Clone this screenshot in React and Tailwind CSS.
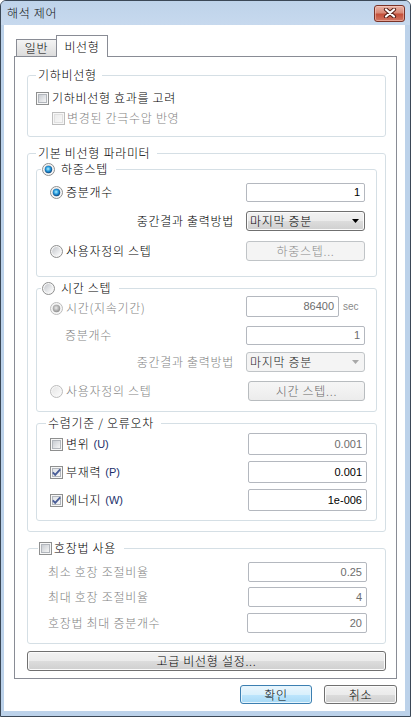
import React, { useId } from "react";

function Radio({ checked = false, disabled = false }) {
  const uid = useId().replace(/[^a-zA-Z0-9]/g, "");
  return (
    <svg width="13" height="13" viewBox="0 0 13 13" className="shrink-0">
      <defs>
        <linearGradient id={`rf${uid}`} x1="0" y1="0" x2="1" y2="1">
          <stop offset="0" stopColor={disabled ? "#e6e6e6" : "#c4c7cc"} />
          <stop offset="1" stopColor={disabled ? "#fafafa" : "#ffffff"} />
        </linearGradient>
        <radialGradient id={`rd${uid}`} cx="0.45" cy="0.42" r="0.6">
          <stop offset="0" stopColor={disabled ? "#ececec" : "#aef2ff"} />
          <stop offset="0.55" stopColor={disabled ? "#b4b4b4" : "#2293d8"} />
          <stop offset="1" stopColor={disabled ? "#8c8c8c" : "#0c3d70"} />
        </radialGradient>
      </defs>
      <circle cx="6.5" cy="6.5" r="6" fill="#f6f6f6" stroke={disabled ? "#bcbcbc" : "#8e8f8f"} />
      <circle cx="6.5" cy="6.5" r="4.4" fill={`url(#rf${uid})`} />
      {checked && <circle cx="6.5" cy="6.5" r="3.7" fill={`url(#rd${uid})`} />}
    </svg>
  );
}

function Check({ checked = false, disabled = false }) {
  const uid = useId().replace(/[^a-zA-Z0-9]/g, "");
  return (
    <svg width="13" height="13" viewBox="0 0 13 13" className="shrink-0">
      <defs>
        <linearGradient id={`cf${uid}`} x1="0" y1="0" x2="1" y2="1">
          <stop offset="0" stopColor={disabled ? "#ebebeb" : checked ? "#dfe2e6" : "#c6cad0"} />
          <stop offset="1" stopColor={disabled ? "#f8f8f8" : "#f8f8f8"} />
        </linearGradient>
      </defs>
      <rect x="0.5" y="0.5" width="12" height="12" fill="#f7f7f7" stroke={disabled ? "#bdbdbd" : "#8e8f8f"} />
      <rect x="2.5" y="2.5" width="8" height="8" fill={`url(#cf${uid})`} stroke={disabled ? "#e0e0e0" : "#b2b6bc"} />
      {checked && (
        <path d="M2.8 6.4 L5.2 8.9 L10.2 3.3" fill="none" stroke="#4a5e98" strokeWidth="1.9" />
      )}
    </svg>
  );
}

function Field({ value, className, muted = false }) {
  return (
    <div
      className={`${className} shrink-0 border border-[#b4b8bf] rounded-[2px] bg-white flex items-center justify-end pr-[4px] font-['Liberation_Sans',sans-serif] font-normal text-[11px] leading-[13px] tracking-normal ${
        muted ? "text-[#6d6d6d]" : "text-black"
      }`}
    >
      {value}
    </div>
  );
}

function Combo({ disabled = false }) {
  return (
    <div
      className={`w-[119px] h-[20px] shrink-0 rounded-[3px] border flex items-center justify-between pl-[3px] pr-[5px] ${
        disabled
          ? "border-[#c0c4c7] bg-[#f4f4f4] text-[#1a1a1a]"
          : "border-[#707070] bg-[linear-gradient(#f2f2f2_0%,#ebebeb_50%,#dddddd_50%,#cfcfcf_100%)] shadow-[inset_0_0_0_1px_#fbfbfb] text-black"
      }`}
    >
      <span>마지막 증분</span>
      <svg width="7" height="4" viewBox="0 0 7 4">
        <path d="M0 0 H7 L3.5 4 Z" fill={disabled ? "#a8a8a8" : "#000"} />
      </svg>
    </div>
  );
}

function Group({ legend, className, children }) {
  return (
    <div className={`border border-[#d5dfe5] rounded-[3px] ${className}`}>
      {legend}
      {children}
    </div>
  );
}

export default function App() {
  return (
    <div className="w-[411px] h-[717px] font-['Noto_Sans_CJK_KR',sans-serif] font-light text-[12px] leading-[16px] tracking-[0.7px] text-black">
      <div className="w-full h-full flex flex-col border border-[#3b4857] rounded-t-[6px] bg-[#bcd2ea] overflow-hidden">
        {/* Title bar */}
        <div className="h-[24px] shrink-0 flex items-center justify-between pl-[6px] pr-[5px] bg-[linear-gradient(#bed3ea,#c7d9ee)]">
          <span className="text-[12px] text-[#111]">해석 제어</span>
          <div className="w-[31px] h-[17px] rounded-[3px] border border-[#7a3328] bg-[linear-gradient(#e9b3a6_0%,#d98a78_45%,#c4503a_55%,#d27764_100%)] shadow-[inset_0_0_0_1px_rgba(255,220,210,0.45)] flex items-center justify-center">
            <svg width="14" height="10" viewBox="0 0 14 10">
              <path d="M3 1.5 L11 8.5 M11 1.5 L3 8.5" stroke="#5a2219" strokeWidth="4.2" strokeLinecap="round" />
              <path d="M3 1.5 L11 8.5 M11 1.5 L3 8.5" stroke="#ffffff" strokeWidth="2.2" strokeLinecap="round" />
            </svg>
          </div>
        </div>

        {/* Client */}
        <div className="flex-1 ml-[3px] mr-[5px] mb-[5px] bg-white pt-[10px] pl-[10px] pr-[8px] flex flex-col">
          {/* Tabs */}
          <div className="flex items-end h-[21px] pl-[2px]">
            <div className="w-[40px] h-[17px] border-l border-t border-[#898c95] bg-[linear-gradient(#f4f4f4,#dcdcdc)] flex items-center justify-center">
              일반
            </div>
            <div className="w-[52px] h-[22px] -mb-[1px] relative z-10 border-l border-t border-r border-[#898c95] bg-white flex items-center justify-center">
              비선형
            </div>
          </div>

          {/* Panel */}
          <div className="border border-[#898c95] bg-white pt-[18px] pb-[7px] flex flex-col">
            {/* Group 1 */}
            <Group
              className="ml-[12px] mr-[10px] pb-[10px]"
              legend={
                <div className="-mt-[9px] ml-[8px] pl-[2px] pr-[5px] bg-white w-fit h-[16px] flex items-center">기하비선형</div>
              }
            >
              <div className="mt-[7px] h-[16px] pl-[8px] flex items-center gap-[3px]">
                <Check />
                <span>기하비선형 효과를 고려</span>
              </div>
              <div className="mt-[4px] h-[16px] pl-[24px] flex items-center gap-[2px] text-[#838383]">
                <Check disabled />
                <span>변경된 간극수압 반영</span>
              </div>
            </Group>

            {/* Group 2 */}
            <Group
              className="mt-[16px] ml-[12px] mr-[10px] pb-[10px]"
              legend={
                <div className="-mt-[9px] ml-[8px] pl-[2px] pr-[7px] bg-white w-fit h-[16px] flex items-center">기본 비선형 파라미터</div>
              }
            >
              {/* Sub: 하중스텝 */}
              <Group
                className="mt-[8px] mx-[8px] pb-[15px]"
                legend={
                  <div className="-mt-[9px] ml-[4px] pl-[1px] pr-[8px] bg-white w-fit h-[16px] flex items-center gap-[6px]">
                    <Radio checked />
                    <span>하중스텝</span>
                  </div>
                }
              >
                <div className="mt-[5px] h-[20px] pl-[13px] pr-[11px] flex items-center">
                  <Radio checked />
                  <span className="ml-[3px]">증분개수</span>
                  <div className="ml-auto">
                    <Field value="1" className="w-[119px] h-[19px]" />
                  </div>
                </div>
                <div className="mt-[9px] h-[20px] pr-[11px] flex items-center justify-end gap-[12px]">
                  <span>중간결과 출력방법</span>
                  <Combo />
                </div>
                <div className="mt-[10px] h-[20px] pl-[13px] pr-[11px] flex items-center">
                  <Radio />
                  <span className="ml-[3px]">사용자정의 스텝</span>
                  <div className="ml-auto w-[119px] h-[20px] rounded-[3px] border border-[#c0c4c7] bg-[#f4f4f4] flex items-center justify-center text-[#8a8a8a]">
                    하중스텝...
                  </div>
                </div>
              </Group>

              {/* Sub: 시간 스텝 */}
              <Group
                className="mt-[11px] mx-[8px] pb-[10px]"
                legend={
                  <div className="-mt-[9px] ml-[4px] pl-[1px] pr-[8px] bg-white w-fit h-[16px] flex items-center gap-[6px]">
                    <Radio />
                    <span>시간 스텝</span>
                  </div>
                }
              >
                <div className="h-[21px] pl-[13px] pr-[11px] flex items-center">
                  <div className="self-end mb-[1px] h-[16px] flex items-center gap-[3px] text-[#838383]">
                    <Radio checked disabled />
                    <span>시간(지속기간)</span>
                  </div>
                  <div className="ml-auto flex items-center gap-[4px]">
                    <Field value="86400" muted className="w-[93px] h-[21px]" />
                    <span className="w-[22px] font-['Liberation_Sans',sans-serif] font-normal text-[10px] tracking-normal text-[#8a8a8a]">sec</span>
                  </div>
                </div>
                <div className="mt-[8px] h-[20px] pl-[28px] pr-[11px] flex items-center">
                  <span className="text-[#838383]">증분개수</span>
                  <div className="ml-auto">
                    <Field value="1" muted className="w-[119px] h-[19px]" />
                  </div>
                </div>
                <div className="mt-[7px] h-[20px] pr-[11px] flex items-center justify-end gap-[12px]">
                  <span className="text-[#838383]">중간결과 출력방법</span>
                  <Combo disabled />
                </div>
                <div className="mt-[9px] h-[20px] pl-[13px] pr-[11px] flex items-center">
                  <Radio disabled />
                  <span className="ml-[3px] text-[#838383]">사용자정의 스텝</span>
                  <div className="ml-auto w-[117px] h-[20px] rounded-[3px] border border-[#b8bcbf] bg-[linear-gradient(#f6f6f6,#ececec)] flex items-center justify-center text-[#6a6a6a]">
                    시간 스텝...
                  </div>
                </div>
              </Group>

              {/* Sub: 수렴기준 */}
              <Group
                className="mt-[11px] mx-[8px] pb-[9px]"
                legend={
                  <div className="-mt-[9px] ml-[9px] pl-[2px] pr-[7px] bg-white w-fit h-[16px] flex items-center">수렴기준 / 오류오차</div>
                }
              >
                <div className="mt-[2px] h-[22px] pl-[13px] pr-[9px] flex items-center">
                  <Check />
                  <span className="ml-[3px]">변위</span>
                  <span className="ml-[4px] font-['Liberation_Sans',sans-serif] font-normal text-[11px] tracking-normal text-[#1b2f6b]">(U)</span>
                  <div className="ml-auto">
                    <Field value="0.001" muted className="w-[119px] h-[22px]" />
                  </div>
                </div>
                <div className="mt-[6px] h-[22px] pl-[13px] pr-[9px] flex items-center">
                  <Check checked />
                  <span className="ml-[3px]">부재력</span>
                  <span className="ml-[4px] font-['Liberation_Sans',sans-serif] font-normal text-[11px] tracking-normal text-[#1b2f6b]">(P)</span>
                  <div className="ml-auto">
                    <Field value="0.001" className="w-[119px] h-[22px]" />
                  </div>
                </div>
                <div className="mt-[6px] h-[22px] pl-[13px] pr-[9px] flex items-center">
                  <Check checked />
                  <span className="ml-[3px]">에너지</span>
                  <span className="ml-[4px] font-['Liberation_Sans',sans-serif] font-normal text-[11px] tracking-normal text-[#1b2f6b]">(W)</span>
                  <div className="ml-auto">
                    <Field value="1e-006" className="w-[119px] h-[22px]" />
                  </div>
                </div>
              </Group>
            </Group>

            {/* Group 3 */}
            <Group
              className="mt-[16px] ml-[12px] mr-[10px] pb-[10px]"
              legend={
                <div className="-mt-[9px] ml-[10px] pl-[1px] pr-[8px] bg-white w-fit h-[16px] flex items-center gap-[2px]">
                  <Check />
                  <span>호장법 사용</span>
                </div>
              }
            >
              <div className="mt-[6px] h-[20px] pl-[20px] pr-[18px] flex items-center">
                <span className="text-[#838383]">최소 호장 조절비율</span>
                <div className="ml-auto">
                  <Field value="0.25" muted className="w-[119px] h-[20px]" />
                </div>
              </div>
              <div className="mt-[5px] h-[20px] pl-[20px] pr-[18px] flex items-center">
                <span className="text-[#838383]">최대 호장 조절비율</span>
                <div className="ml-auto">
                  <Field value="4" muted className="w-[119px] h-[20px]" />
                </div>
              </div>
              <div className="mt-[6px] h-[20px] pl-[20px] pr-[18px] flex items-center">
                <span className="text-[#838383]">호장법 최대 증분개수</span>
                <div className="ml-auto">
                  <Field value="20" muted className="w-[120px] h-[20px]" />
                </div>
              </div>
            </Group>

            {/* Advanced button */}
            <div className="mt-[7px] ml-[12px] mr-[10px] h-[20px] rounded-[3px] border border-[#707070] bg-[linear-gradient(#f2f2f2_0%,#ebebeb_50%,#dddddd_50%,#cfcfcf_100%)] shadow-[inset_0_0_0_1px_#fbfbfb] flex items-center justify-center">
              고급 비선형 설정...
            </div>
          </div>

          {/* Bottom buttons */}
          <div className="mt-[6px] flex justify-end gap-[12px]">
            <div className="w-[72px] h-[19px] rounded-[3px] border border-[#3c7fb1] bg-[linear-gradient(#eaf6fd_0%,#d9f0fc_50%,#bee6fd_50%,#a7d9f5_100%)] shadow-[inset_0_0_0_1px_#e6f5fd] flex items-center justify-center">
              확인
            </div>
            <div className="w-[73px] h-[19px] rounded-[3px] border border-[#707070] bg-[linear-gradient(#f2f2f2_0%,#ebebeb_50%,#dddddd_50%,#cfcfcf_100%)] shadow-[inset_0_0_0_1px_#fbfbfb] flex items-center justify-center">
              취소
            </div>
          </div>
        </div>
      </div>
    </div>
  );
}
